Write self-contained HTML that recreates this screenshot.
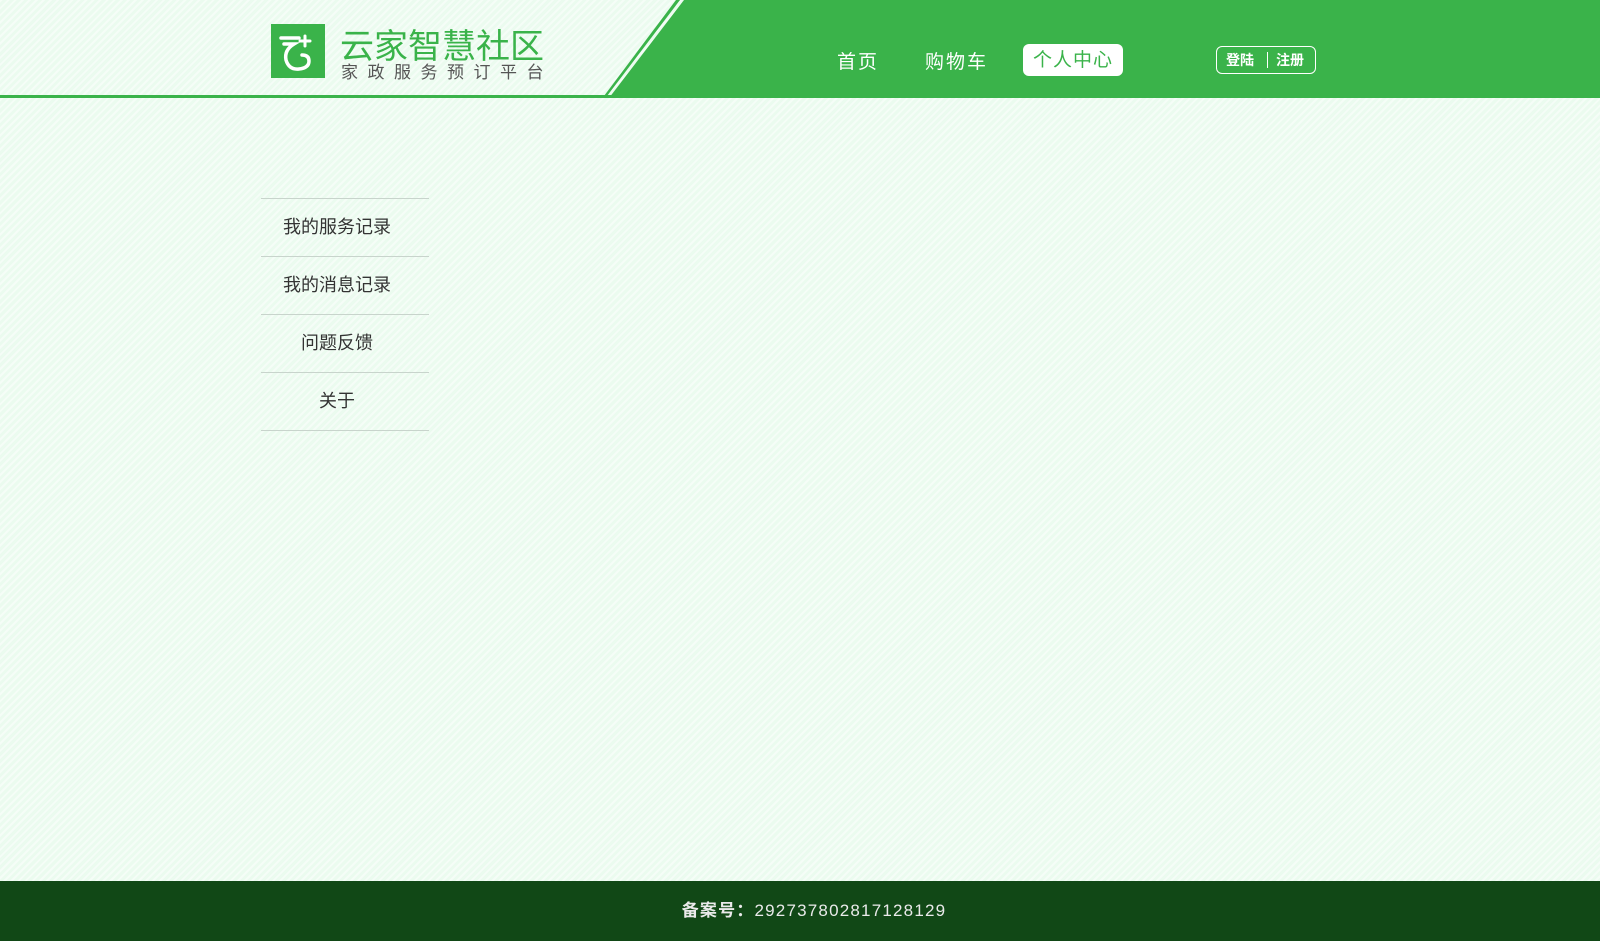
<!DOCTYPE html>
<html><head><meta charset="utf-8"><style>
*{margin:0;padding:0;box-sizing:border-box}
body{width:1600px;height:941px;position:relative;overflow:hidden;background:#ebfbef;font-family:"Liberation Sans","Noto Sans CJK SC",sans-serif;
background-image:repeating-linear-gradient(135deg,rgba(255,255,255,.5) 0 2px,rgba(255,255,255,0) 2px 5px);}
.hdr{position:absolute;left:0;top:0;width:1600px;height:98px;}
.line{position:absolute;left:0;top:95px;width:1600px;height:3px;background:#3ab34a}
.t{position:absolute;white-space:nowrap}
.side{position:absolute;left:261px;width:168px;padding-right:16px;border-top:1px solid #c8d4cc;height:58px;text-align:center;line-height:56px;font-size:18px;color:#333}
.foot{position:absolute;left:0;top:881px;width:1600px;height:60px;background:#114816;color:#eaeaea;font-size:17px;text-align:center;line-height:60px;letter-spacing:1.2px;padding-left:28px}
</style></head><body>
<svg class="hdr" width="1600" height="98" viewBox="0 0 1600 98">
<polygon points="609,98 684,0 1600,0 1600,98" fill="#3ab34a"/>
<polygon points="604,96 676,0 680,0 607,96" fill="#3ab34a"/>
<rect x="271" y="24" width="54" height="54" fill="#3ab34a"/>
<path d="M281 38 h18 M284 44 h10 q-10 6 -8 16 q3 10 13 9 q10 -1 10 -8 q0 -6 -7 -6" stroke="#fff" stroke-width="3.5" fill="none" stroke-linecap="round"/>
<path d="M305 36 v10 M300 41 h10" stroke="#fff" stroke-width="3" stroke-linecap="round"/>
</svg>
<div class="line"></div>
<div class="t" style="left:340px;top:19px;font-size:34px;color:#3ab34a;letter-spacing:0px">云家智慧社区</div>
<div class="t" style="left:341px;top:58px;font-size:17px;color:#555;letter-spacing:9.5px">家政服务预订平台</div>
<div class="t" style="left:837px;top:47px;font-size:19px;color:#fff;letter-spacing:2px">首页</div>
<div class="t" style="left:925px;top:47px;font-size:19px;color:#fff;letter-spacing:2px">购物车</div>
<div class="t" style="left:1023px;top:44px;width:100px;height:32px;background:#fff;border-radius:6px;color:#3ab34a;font-size:19px;text-align:center;line-height:33px;letter-spacing:1px">个人中心</div>
<div class="t" style="left:1216px;top:46px;width:100px;height:28px;border:1px solid #fff;border-radius:6px;color:#fff;font-size:14px;line-height:26px;font-weight:bold">
<span style="position:absolute;left:9px">登陆</span><span style="position:absolute;left:50px;top:5px;width:1px;height:16px;background:#fff"></span><span style="position:absolute;left:59px">注册</span></div>
<div class="side" style="top:198px">我的服务记录</div>
<div class="side" style="top:256px">我的消息记录</div>
<div class="side" style="top:314px">问题反馈</div>
<div class="side" style="top:372px;border-bottom:1px solid #c8d4cc;height:59px">关于</div>
<div class="foot"><b>备案号：</b>292737802817128129</div>
</body></html>
